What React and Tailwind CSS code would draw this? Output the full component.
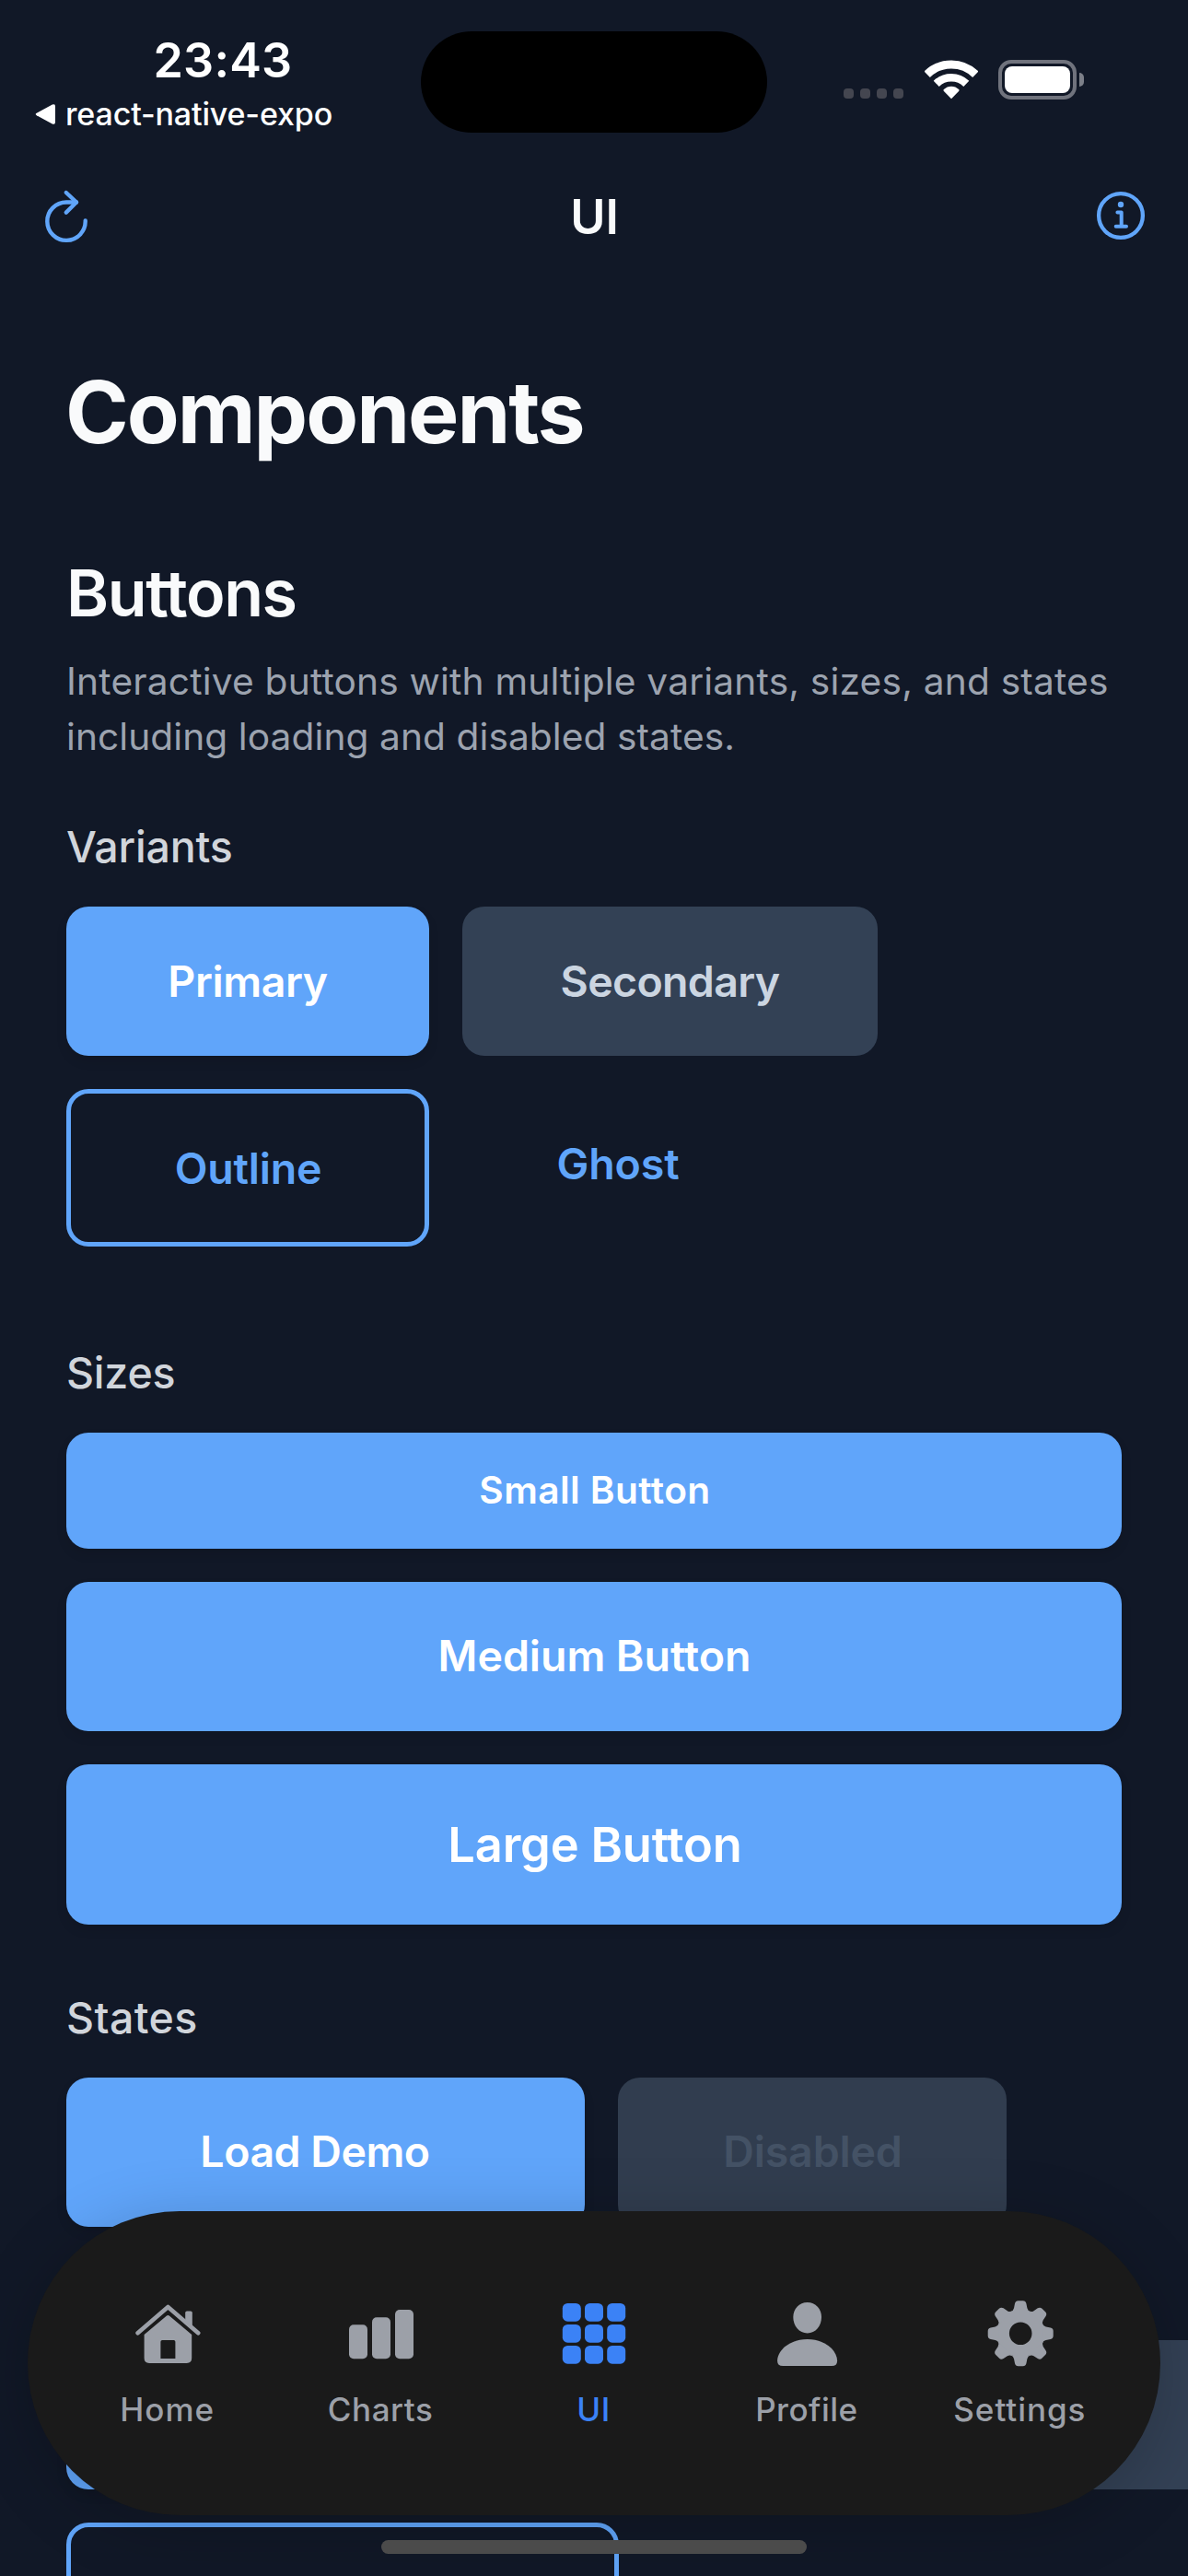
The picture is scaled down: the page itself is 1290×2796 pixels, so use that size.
import React from "react";

function StatusBar() {
  return (
    <div className="flex h-[177px] shrink-0 items-start text-white">
      <div className="flex w-[457px] flex-col pl-[37px] pt-[34px]">
        <div className="pl-[129.5px] text-[52px] font-semibold leading-[64px] tracking-[0.2px]">23:43</div>
        <div className="flex items-center gap-[11px] pt-[3px]">
          <svg width="23" height="24" viewBox="0 0 23 24" fill="currentColor">
            <path d="M2.8 10.8 L19.8 1.6 Q23 0.2 23 3.5 L23 20.5 Q23 23.8 19.8 22.4 L2.8 13.2 Q0.6 12 2.8 10.8 Z" />
          </svg>
          <div className="whitespace-nowrap text-[34px] font-medium leading-[46px] tracking-[-0.15px]">react-native-expo</div>
        </div>
      </div>
      <div className="mt-[34px] h-[110px] w-[376px] rounded-full bg-black" />
      <div className="flex items-start pl-[83px] pt-[65px]">
        <div className="mt-[31px] flex gap-[7px]">
          {[0, 1, 2, 3].map((i) => (
            <div key={i} className="size-[11px] rounded-[4px] bg-[#444650]" />
          ))}
        </div>
        <svg width="58" height="43" viewBox="0 0 58 43" fill="none" className="ml-[22.5px]">
          <path d="M2.7 15.7 A37.6 37.6 0 0 1 55.3 15.7" stroke="white" strokeWidth="9" />
          <path d="M12.7 25.8 A23.4 23.4 0 0 1 45.3 25.8" stroke="white" strokeWidth="8.6" />
          <path d="M29 42.3 L20.7 33.8 Q20 32.9 20.9 32.1 Q24.3 28.7 29 28.7 Q33.7 28.7 37.1 32.1 Q38 32.9 37.3 33.8 Z" fill="white" />
        </svg>
        <div className="ml-[22px] flex items-center gap-[3px]">
          <div className="h-[43px] w-[85px] rounded-[14px] border-[4px] border-[#70737d] p-[3px]">
            <div className="h-full w-full rounded-[8px] bg-white" />
          </div>
          <div className="h-[15px] w-[5px] rounded-r-full bg-[#7c7f88]" />
        </div>
      </div>
    </div>
  );
}

function Header() {
  return (
    <div className="flex h-[123px] shrink-0 items-start justify-between px-[44px]">
      <svg width="56" height="62" viewBox="0 0 56 62" fill="none" stroke="#60a5fa" strokeWidth="4.4" strokeLinecap="round" strokeLinejoin="round" className="mt-[27px]">
        <path d="M48.7 35.5 A20.7 20.7 0 1 1 28 15.5 L39 15.5" />
        <path d="M27.8 5 L39 15.5 L27.8 26.6" />
      </svg>
      <div className="pl-[3px] pt-[26px] text-[52px] font-semibold leading-[66px] text-[#f9fafb]">UI</div>
      <svg width="58" height="58" viewBox="0 0 58 58" fill="none" stroke="#60a5fa" strokeWidth="4" strokeLinecap="round" strokeLinejoin="round" className="mt-[28px]">
        <circle cx="29" cy="29" r="23.9" strokeWidth="4.3" />
        <circle cx="29" cy="17" r="3.2" fill="#60a5fa" stroke="none" />
        <path d="M25.4 25.4 H29.7 V40.7 M23.7 40.7 H35" />
      </svg>
    </div>
  );
}

const PRIMARY = "flex items-center justify-center rounded-[24px] bg-[#60a5fa] text-white font-semibold whitespace-nowrap shadow-[0_6px_12px_rgba(0,0,0,0.1)]";

function SubHeading({ children, className }) {
  return <h3 className={"text-[46.5px] font-medium leading-[58px] text-[#d1d5db] " + className}>{children}</h3>;
}

function ButtonsSection() {
  return (
    <section className="pt-[107px]">
      <h2 className="text-[70px] font-semibold leading-[84px] tracking-[-1.4px] text-[#f9fafb]">Buttons</h2>
      <p className="pt-[24px] text-[40.7px] leading-[60px] tracking-[0.18px] text-[#9ca3af]">
        Interactive buttons with multiple variants, sizes, and states <span className="tracking-[0.06px]">including loading and disabled states.</span>
      </p>

      <SubHeading className="mt-[60px] tracking-[-0.18px]">Variants</SubHeading>
      <div className="mt-[36px] flex flex-col gap-[36px] text-[46.5px] leading-[58px]">
        <div className="flex items-start gap-[36px]">
          <button className={PRIMARY + " h-[162px] w-[394px] tracking-[-0.4px]"}>Primary</button>
          <button className="flex h-[162px] w-[451px] items-center justify-center rounded-[24px] bg-[#334155] font-semibold tracking-[-0.67px] text-[#cbd5e1]">Secondary</button>
        </div>
        <div className="flex items-start gap-[36px]">
          <button className="flex h-[171px] w-[394px] items-center justify-center rounded-[24px] border-[5px] border-[#60a5fa] pl-[1px] font-semibold tracking-[-0.2px] text-[#60a5fa]">Outline</button>
          <button className="flex h-[162px] w-[338px] items-center justify-center rounded-[24px] font-semibold tracking-[-0.16px] text-[#60a5fa]">Ghost</button>
        </div>
      </div>

      <SubHeading className="mt-[108px] tracking-[-0.2px]">Sizes</SubHeading>
      <div className="mt-[36px] flex flex-col gap-[36px]">
        <button className={PRIMARY + " h-[126px] pl-[2px] text-[40.7px] tracking-[0.4px]"}>Small Button</button>
        <button className={PRIMARY + " h-[162px] pl-[1px] text-[46.5px] tracking-[-0.05px]"}>Medium Button</button>
        <button className={PRIMARY + " h-[174px] pl-[2px] text-[52.4px] tracking-[-0.2px]"}>Large Button</button>
      </div>

      <SubHeading className="mt-[72px] tracking-[0.4px]">States</SubHeading>
      <div className="mt-[36px] flex gap-[36px] text-[46.5px]">
        <button className={PRIMARY + " h-[162px] w-[563px] pr-[23px] tracking-[-0.49px]"}>Load Demo</button>
        <button className="flex h-[162px] w-[422px] items-center justify-center rounded-[24px] bg-[#313d4f] pl-[1px] font-semibold tracking-[-0.17px] text-[#445265]">Disabled</button>
      </div>

      <div className="mt-[123px] flex w-[1400px] gap-[36px]">
        <div className="h-[162px] w-[563px] rounded-[24px] bg-[#60a5fa] shadow-[0_6px_12px_rgba(0,0,0,0.1)]" />
        <div className="h-[162px] w-[760px] rounded-[24px] bg-[#334155]" />
      </div>
      <div className="mt-[36px] h-[171px] w-[600px] rounded-[24px] border-[5px] border-[#60a5fa]" />
    </section>
  );
}

function HomeIcon() {
  return (
    <svg width="72" height="72" viewBox="0 0 72 72" fill="none">
      <path d="M3.6 35.2 L36.4 7 L69.2 35.2" stroke="currentColor" strokeWidth="4.6" strokeLinecap="round" strokeLinejoin="round" />
      <path d="M55.2 22 V13.2 Q55.2 11.5 57 11.5 H61 Q62.8 11.5 62.8 13.2 V29 Z" fill="currentColor" />
      <path fillRule="evenodd" fill="currentColor" d="M10.6 37 L35 16.6 Q36.4 15.4 37.8 16.6 L62.2 37 V62.6 Q62.2 68 56.8 68 H16 Q10.6 68 10.6 62.6 Z M30.2 43 Q28.4 43 28.4 44.8 V63 H44.4 V44.8 Q44.4 43 42.6 43 Z" />
    </svg>
  );
}

function ChartsIcon() {
  return (
    <svg width="72" height="72" viewBox="0 0 72 72" fill="currentColor">
      <rect x="2" y="26.3" width="20" height="37" rx="5" />
      <rect x="27" y="18.2" width="20" height="45.1" rx="5" />
      <rect x="52" y="10" width="20" height="53.3" rx="5" />
    </svg>
  );
}

function GridIcon() {
  return (
    <svg width="72" height="72" viewBox="0 0 72 72" fill="currentColor">
      {[0, 1, 2].map((r) =>
        [0, 1, 2].map((c) => <rect key={r + "-" + c} x={1.8 + c * 24.2} y={2.9 + r * 23} width="20" height="19.8" rx="5.5" />)
      )}
    </svg>
  );
}

function ProfileIcon() {
  return (
    <svg width="72" height="72" viewBox="0 0 72 72" fill="currentColor">
      <path d="M36.7 2 C45.7 2 52 9 52 18 C52 27.5 45.7 35.4 36.7 35.4 C27.7 35.4 21.3 27.5 21.3 18 C21.3 9 27.7 2 36.7 2 Z" />
      <path d="M36.7 42 C55.7 42 69.1 54 69.1 65.5 Q69.1 71 63.2 71 H10.2 Q4.1 71 4.1 65.5 C4.1 54 17.7 42 36.7 42 Z" />
    </svg>
  );
}

function SettingsIcon() {
  return (
    <svg width="72" height="72" viewBox="0 0 72 72" fill="currentColor" className="overflow-visible">
      <circle cx="37.2" cy="35.7" r="19" fill="none" stroke="currentColor" strokeWidth="13.4" />
      {[0, 45, 90, 135, 180, 225, 270, 315].map((a) => (
        <path key={a} transform={`rotate(${a} 37.2 35.7)`} d="M26.2 12.2 Q29.5 11 30 8.2 L31 3.2 Q31.7 0.2 34.7 0.2 H39.7 Q42.7 0.2 43.4 3.2 L44.4 8.2 Q44.9 11 48.2 12.2 Z" />
      ))}
    </svg>
  );
}

function TabBar() {
  const tabs = [
    { label: "Home", icon: <HomeIcon />, ls: "tracking-[1px]" },
    { label: "Charts", icon: <ChartsIcon />, ls: "tracking-[0.6px]" },
    { label: "UI", icon: <GridIcon />, ls: "tracking-[0.5px]", active: true },
    { label: "Profile", icon: <ProfileIcon />, ls: "tracking-[0.5px]" },
    { label: "Settings", icon: <SettingsIcon />, ls: "tracking-[0.95px]" },
  ];
  return (
    <nav className="absolute left-[30px] top-[2400px] flex h-[330px] w-[1230px] rounded-full bg-[#1a1a1a] pl-[36px] pr-[37px] pt-[97px] shadow-[0_12px_72px_rgba(0,0,0,0.2)]">
      {tabs.map((t) => (
        <div key={t.label} className={"flex flex-1 flex-col items-center gap-[24px] " + (t.active ? "text-[#3b82f6]" : "text-[#9ca0a8]")}>
          {t.icon}
          <span className={"text-[35px] font-medium leading-[44px] " + t.ls}>{t.label}</span>
        </div>
      ))}
    </nav>
  );
}

export default function App() {
  return (
    <div className="relative flex h-[2796px] w-[1290px] flex-col overflow-hidden bg-[#111827] font-['Inter',sans-serif]">
      <StatusBar />
      <Header />
      <main className="flex flex-col px-[72px] pt-[91px]">
        <h1 className="-ml-[1px] text-[93px] font-bold leading-[112px] tracking-[-2.04px] text-[#f9fafb]">Components</h1>
        <div className="-mt-[8px]">
          <ButtonsSection />
        </div>
      </main>
      <TabBar />
      <div className="absolute left-[414px] top-[2757px] h-[15px] w-[462px] rounded-full bg-[#4b4b4b]" />
    </div>
  );
}
